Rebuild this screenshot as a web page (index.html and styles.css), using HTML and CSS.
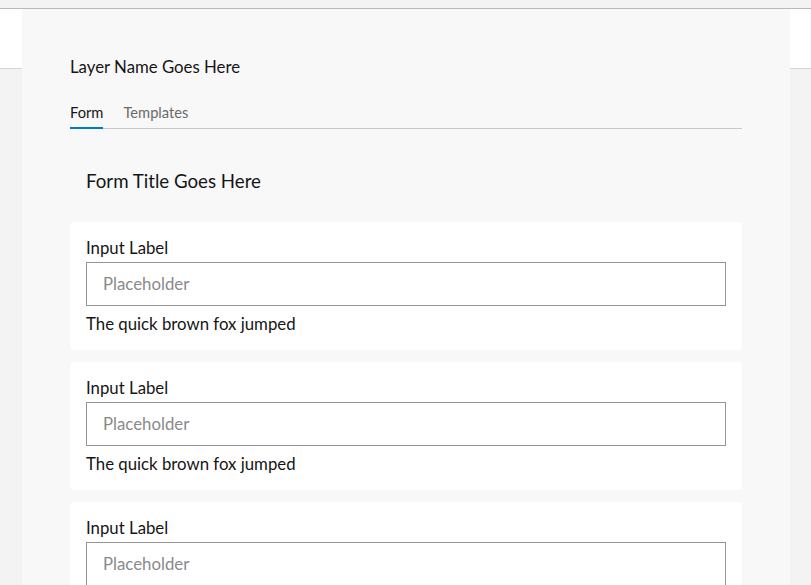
FILE: index.html
```html
<!DOCTYPE html>
<html lang="en">
<head>
  <meta charset="UTF-8" />
  <meta name="viewport" content="width=device-width, initial-scale=1.0" />
  <title>Layer Form</title>
  <link rel="stylesheet" href="styles.css">
</head>
<body>
  <div class="topbar"></div>
  <div class="header"></div>
  <div class="panel">
    <h2 class="layer-title">Layer Name Goes Here</h2>
    <div class="tabs">
      <a class="tab active">Form</a>
      <a class="tab">Templates</a>
    </div>

    <h3 class="form-title">Form Title Goes Here</h3>

    <div class="card">
      <label>Input Label</label>
      <input type="text" placeholder="Placeholder" />
      <div class="helper">The quick brown fox jumped</div>
    </div>
    <div class="card">
      <label>Input Label</label>
      <input type="text" placeholder="Placeholder" />
      <div class="helper">The quick brown fox jumped</div>
    </div>
    <div class="card">
      <label>Input Label</label>
      <input type="text" placeholder="Placeholder" />
      <div class="helper">The quick brown fox jumped</div>
    </div>
  </div>
</body>
</html>
```

FILE: styles.css
```css
body {
  font-family: Lato, 'Noto Sans', sans-serif;
  background: #f3f3f3;
  color: #151515;
  margin: 0;
  overflow: hidden;
}
.topbar {
  height: 8px;
  background: #f3f3f3;
  border-bottom: 1px solid #b9b9b9;
}
.header {
  height: 59px;
  background: #fff;
  border-bottom: 1px solid #d4d4d4;
}
.panel {
  width: 672px;
  margin: -60px 0 0 22px;
  padding: 0 48px 40px;
  background: #f8f8f8;
  position: relative;
}
.layer-title {
  margin: 0;
  padding-top: 47px;
  font-size: 16.8px;
  font-weight: 400;
  line-height: 22px;
}
.tabs {
  display: flex;
  gap: 20px;
  margin-top: 24px;
  border-bottom: 1px solid #c8c8c8;
}
.tab {
  font-size: 14.7px;
  line-height: 20px;
  padding-bottom: 5px;
  color: #6a6a6a;
  border-bottom: 2px solid transparent;
  margin-bottom: -1px;
}
.tab.active {
  color: #151515;
  border-bottom-color: #007ac2;
}
.form-title {
  margin: 0;
  padding: 40px 16px 29px;
  font-size: 18.7px;
  font-weight: 400;
  line-height: 24px;
}
.card {
  background: #fff;
  border-radius: 4px;
  padding: 14px 16px 14px;
  margin-bottom: 12px;
}
label {
  display: block;
  font-size: 16.8px;
  line-height: 24px;
  margin-bottom: 2px;
}
input {
  display: block;
  box-sizing: border-box;
  width: 100%;
  height: 44px;
  padding: 0 16px 1px;
  border: 1px solid #959595;
  font-family: inherit;
  font-size: 16.8px;
  color: #151515;
  background: #fff;
}
input::placeholder {
  color: #8a8a8a;
}
.helper {
  margin-top: 6px;
  font-size: 16.8px;
  line-height: 24px;
}
```
